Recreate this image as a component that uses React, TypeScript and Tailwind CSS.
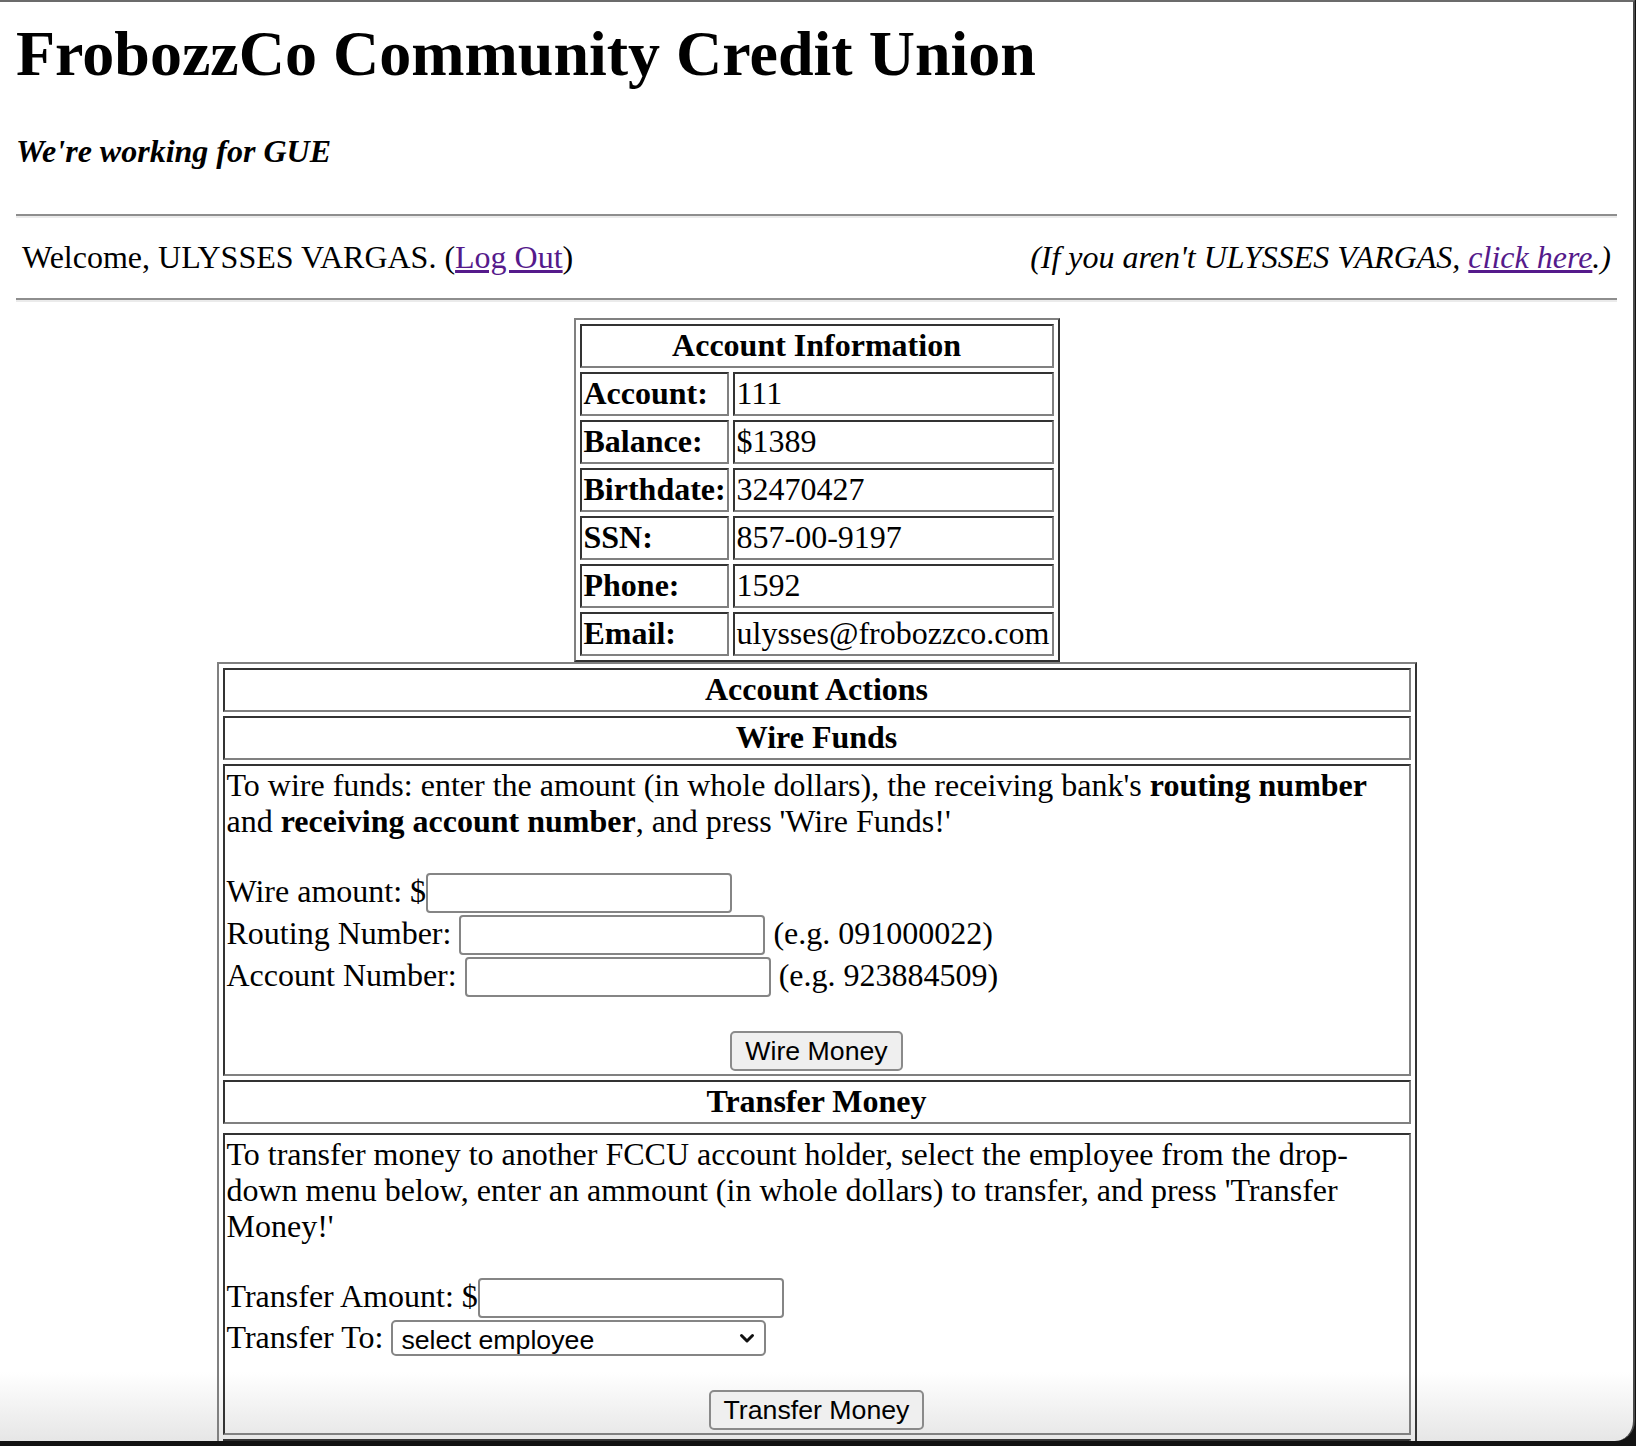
import React from 'react';

// inset / outset looks of an old-school bordered table, at 2x
const outer =
  'border-2 border-t-[#808080] border-l-[#808080] border-r-[#333333] border-b-[#333333] p-[4px]';
const cell =
  'border-2 border-t-[#333333] border-l-[#333333] border-r-[#808080] border-b-[#808080] px-[2px] pt-[1px] pb-[3px] leading-[36px]';
const input = 'h-[40px] w-[306px] rounded-[4px] border-2 border-[#858585] bg-white outline-none';
const button =
  "h-[40px] rounded-[5px] border-2 border-[#8a8a8a] bg-[#efefef] px-[13px] font-['Liberation_Sans',Arial,sans-serif] text-[26.7px] leading-[32px] text-black";

const info = [
  { label: 'Account:', value: '111' },
  { label: 'Balance:', value: '$1389' },
  { label: 'Birthdate:', value: '32470427' },
  { label: 'SSN:', value: '857-00-9197' },
  { label: 'Phone:', value: '1592' },
  { label: 'Email:', value: 'ulysses@frobozzco.com' },
];

const Rule = ({ className }: { className: string }) => (
  <div className={`h-[4px] border-t-2 border-b-2 border-t-[#8e8e8e] border-b-[#ebebeb] ${className}`} />
);

const AccountInfo = () => (
  <div className={`${outer} mx-auto mt-[16px] grid w-[486px] grid-cols-[149px_1fr] gap-[4px]`}>
    <div className={`${cell} col-span-2 text-center font-bold`}>Account Information</div>
    {info.map((row) => (
      <React.Fragment key={row.label}>
        <div className={`${cell} font-bold`}>{row.label}</div>
        <div className={cell}>{row.value}</div>
      </React.Fragment>
    ))}
  </div>
);

const WireFunds = () => (
  <div className={cell}>
    <p className="whitespace-nowrap">
      To wire funds: enter the amount (in whole dollars), the receiving bank's <b>routing number</b>
      <br />
      and <b>receiving account number</b>, and press 'Wire Funds!'
    </p>
    <div className="mt-[34px]">
      <div className="flex h-[42px] items-start">
        <span>Wire amount: $</span>
        <input className={input} />
      </div>
      <div className="flex h-[42px] items-start">
        <span>Routing Number:</span>
        <input className={`${input} ml-[8px]`} />
        <span className="ml-[8px]">(e.g. 091000022)</span>
      </div>
      <div className="flex h-[42px] items-start">
        <span>Account Number:</span>
        <input className={`${input} ml-[8px]`} />
        <span className="ml-[8px]">(e.g. 923884509)</span>
      </div>
    </div>
    <div className="mt-[32px] flex justify-center">
      <button className={button}>Wire Money</button>
    </div>
  </div>
);

const TransferMoney = () => (
  <div className={`${cell} mt-[5px]`}>
    <p className="whitespace-nowrap">
      To transfer money to another FCCU account holder, select the employee from the drop-
      <br />
      down menu below, enter an ammount (in whole dollars) to transfer, and press 'Transfer
      <br />
      Money!'
    </p>
    <div className="mt-[34px]">
      <div className="flex h-[42px] items-start">
        <span>Transfer Amount: $</span>
        <input className={input} />
      </div>
      <div className="flex h-[42px] items-start">
        <span className="-mt-[1px]">Transfer To:</span>
        <div className="ml-[8px] flex h-[36px] w-[375px] items-center rounded-[5px] border-2 border-[#858585] bg-white">
          <select className="h-full flex-1 appearance-none bg-transparent pl-[8px] font-['Liberation_Sans',Arial,sans-serif] text-[26.7px] text-black outline-none">
            <option>select employee</option>
          </select>
          <svg width="16" height="11" viewBox="0 0 16 11" className="mr-[9px]">
            <path d="M2.5 2.5 L8 8 L13.5 2.5" fill="none" stroke="#111" strokeWidth="3" strokeLinecap="round" strokeLinejoin="round" />
          </svg>
        </div>
      </div>
    </div>
    <div className="mt-[28px] flex justify-center">
      <button className={button}>Transfer Money</button>
    </div>
  </div>
);

const AccountActions = () => (
  <div className={`${outer} mx-auto flex w-[1200px] flex-col gap-[4px]`}>
    <div className={`${cell} text-center font-bold`}>Account Actions</div>
    <div className={`${cell} text-center font-bold`}>Wire Funds</div>
    <WireFunds />
    <div className={`${cell} text-center font-bold`}>Transfer Money</div>
    <TransferMoney />
    <div className={`${cell} h-[44px]`} />
  </div>
);

export default function App() {
  return (
    <div className="h-[1446px] w-[1636px] overflow-hidden bg-[#121212]">
      <div className="h-[1441px] w-[1635px] overflow-hidden rounded-br-[20px] border-t-2 border-r-2 border-t-[#6b6b6b] border-r-[#4a4a4a] bg-[linear-gradient(to_bottom,#ffffff_1370px,#e6e6e6_1439px)] px-[16px] font-['Liberation_Serif','Times_New_Roman',serif] text-[32px] text-black">
        <h1 className="mt-[15px] text-[64px] font-bold leading-[74px]">FrobozzCo Community Credit Union</h1>
        <h4 className="mt-[42px] font-bold italic leading-[36px]">We're working for GUE</h4>

        <Rule className="mt-[45px]" />
        <div className="mt-[16px] flex justify-between px-[6px] pt-[5px] pb-[7px] leading-[36px]">
          <span>
            Welcome, ULYSSES VARGAS. (<a href="#" className="text-[#551a8b] underline">Log Out</a>)
          </span>
          <span className="italic">
            (If you aren't ULYSSES VARGAS, <a href="#" className="text-[#551a8b] underline">click here</a>.)
          </span>
        </div>
        <Rule className="mt-[16px]" />

        <AccountInfo />
        <AccountActions />
      </div>
    </div>
  );
}
